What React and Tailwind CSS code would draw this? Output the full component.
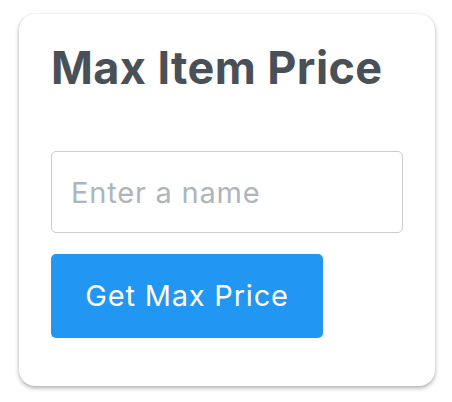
import { useState } from "react";

export default function App() {
  const [name, setName] = useState("");

  return (
    <div className="min-h-[402px] bg-white font-['Inter',sans-serif]">
      <div className="ml-[19px] pt-[14px]">
        <div className="w-[416px] rounded-[16px] bg-white px-[32px] pt-[31px] pb-[48px] shadow-[0_2px_4px_rgba(0,0,0,0.32),0_0_2px_rgba(0,0,0,0.06)]">
          <h1 className="text-[45px] leading-[45px] font-bold tracking-[0.4px] text-[#495057]">Max Item Price</h1>

          <input
            type="text"
            value={name}
            onChange={(e) => setName(e.target.value)}
            placeholder="Enter a name"
            className="mt-[61px] block h-[82px] w-[352px] rounded-[5px] border-[1.5px] border-[#cccccc] px-[19px] text-[29px] tracking-[0.8px] text-[#495057] placeholder:text-[#adb5bd] outline-none"
          />

          <button className="mt-[21px] flex h-[84px] w-[272px] items-center justify-center rounded-[5px] bg-[#2196f3] text-[29px] tracking-[0.8px] text-white">
            Get Max Price
          </button>
        </div>
      </div>
    </div>
  );
}
